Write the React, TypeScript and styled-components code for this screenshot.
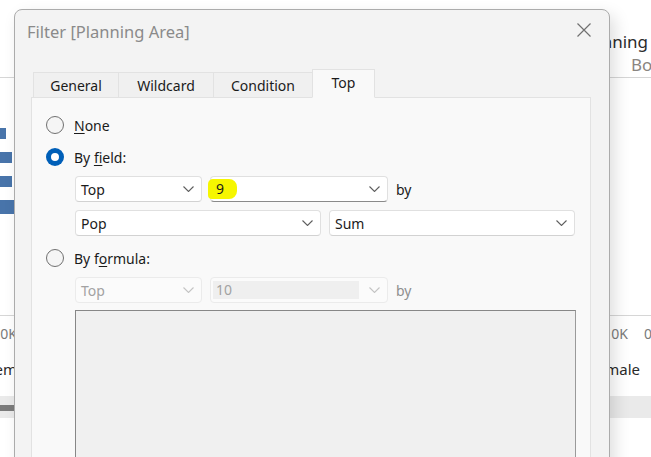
import styled, { createGlobalStyle } from "styled-components";

const GlobalStyle = createGlobalStyle`
  html, body {
    margin: 0;
    padding: 0;
    background: #ffffff;
    overflow: hidden;
  }
  body {
    font-family: "Noto Sans", "Open Sans", sans-serif;
    color: #1b1b1b;
  }
`;

const Page = styled.div`
  position: relative;
  width: 651px;
  height: 457px;
  overflow: hidden;
  background: #ffffff;
`;

/* ---------- report behind the dialog ---------- */

const Backdrop = styled.div`
  display: flex;
  flex-direction: column;
  height: 100%;
`;

const HeaderRow = styled.div`
  height: 77px;
  border-bottom: 1px solid #d6d6d6;
  display: flex;
  justify-content: flex-end;
`;

const HeaderCell = styled.div`
  width: 41px;
  display: flex;
  flex-direction: column;
  padding-top: 32px;
  gap: 3px;
`;

const HeaderText = styled.div<{ $muted?: boolean; $alignEnd?: boolean }>`
  display: flex;
  justify-content: ${(p) => (p.$alignEnd ? "flex-end" : "flex-start")};
  padding: ${(p) => (p.$alignEnd ? "0 3px 0 0" : "0 0 0 21px")};
  font-size: 17px;
  line-height: 20px;
  white-space: nowrap;
  color: ${(p) => (p.$muted ? "#8a8580" : "#2b2b2b")};
`;

const ChartArea = styled.div`
  height: 238px;
  border-bottom: 1px solid #d6d6d6;
  display: flex;
  flex-direction: column;
  gap: 13px;
  padding-top: 50px;
  box-sizing: border-box;
`;

const Bar = styled.div<{ $w: number; $h: number }>`
  width: ${(p) => p.$w}px;
  height: ${(p) => p.$h}px;
  background: #4874aa;
`;

const LowerRow = styled.div<{ $h: number; $pt: number }>`
  height: ${(p) => p.$h}px;
  padding-top: ${(p) => p.$pt}px;
  box-sizing: border-box;
  display: flex;
  justify-content: space-between;
`;

const Cell = styled.div<{ $w: number; $end?: boolean; $gap?: number }>`
  width: ${(p) => p.$w}px;
  display: flex;
  justify-content: ${(p) => (p.$end ? "flex-end" : "flex-start")};
  gap: ${(p) => p.$gap ?? 0}px;
  white-space: nowrap;
`;

const Tick = styled.span`
  font-size: 14px;
  line-height: 18px;
  color: #7a7a7a;
`;

const Category = styled.span`
  font-size: 15px;
  line-height: 20px;
  color: #2a2a2a;
`;

const Band = styled.div`
  height: 22px;
  background: #eaeaea;
  padding-top: 9px;
  box-sizing: border-box;
`;

const BandBar = styled.div`
  width: 30px;
  height: 6px;
  background: #7b7b7b;
`;

/* ---------- dialog ---------- */

const Dialog = styled.div`
  position: absolute;
  left: 14px;
  top: 9px;
  width: 596px;
  height: 470px;
  box-sizing: border-box;
  background: #f3f3f3;
  border: 1px solid #ababab;
  border-radius: 8px;
  box-shadow: 5px 6px 16px rgba(0, 0, 0, 0.13);
  display: flex;
  flex-direction: column;
`;

const TitleBar = styled.div`
  height: 59px;
  display: flex;
  justify-content: space-between;
  align-items: flex-start;
  padding: 11px 18px 0 12px;
  box-sizing: border-box;
`;

const Title = styled.div`
  font-size: 16.5px;
  line-height: 22px;
  color: #8a8a8a;
`;

const CloseButton = styled.button`
  margin-top: 2px;
  width: 14px;
  height: 14px;
  padding: 0;
  border: none;
  background: none;
  display: flex;
`;

const TabStrip = styled.div`
  display: flex;
  align-items: flex-end;
  height: 29px;
  margin: 0 0 -1px 18px;
  position: relative;
  z-index: 1;
`;

const Tab = styled.div<{ $w: number; $active?: boolean }>`
  width: ${(p) => p.$w}px;
  height: ${(p) => (p.$active ? 29 : 26)}px;
  box-sizing: border-box;
  display: flex;
  align-items: center;
  justify-content: center;
  font-size: 14px;
  color: #1b1b1b;
  background: ${(p) => (p.$active ? "#f9f9f9" : "#f0f0f0")};
  border: 1px solid #e2e2e2;
  border-bottom-color: ${(p) => (p.$active ? "#f9f9f9" : "#e2e2e2")};
  margin-left: -1px;
  padding-bottom: ${(p) => (p.$active ? 2 : 0)}px;

  &:first-child {
    margin-left: 0;
  }
`;

const Panel = styled.div`
  flex: 1;
  margin: 0 18px 0 16px;
  background: #f9f9f9;
  border: 1px solid #e2e2e2;
  padding: 18px 0 0 14px;
  display: flex;
  flex-direction: column;
`;

const RadioRow = styled.label<{ $mt?: number }>`
  display: flex;
  align-items: center;
  gap: 10px;
  height: 18px;
  margin-top: ${(p) => p.$mt ?? 0}px;
  font-size: 14px;
`;

const Radio = styled.span<{ $checked?: boolean }>`
  width: 18px;
  height: 18px;
  box-sizing: border-box;
  border-radius: 50%;
  flex: none;
  background: ${(p) => (p.$checked ? "#ffffff" : "#f5f5f5")};
  border: ${(p) => (p.$checked ? "none" : "1px solid #707070")};
  box-shadow: ${(p) => (p.$checked ? "inset 0 0 0 5px #005fb8" : "none")};
`;

const Accel = styled.span`
  text-decoration: underline;
  text-underline-offset: 2px;
`;

const FieldRow = styled.div<{ $mt: number }>`
  display: flex;
  align-items: center;
  gap: 8px;
  margin: ${(p) => p.$mt}px 0 0 29px;
  font-size: 14px;
`;

const Combo = styled.div<{ $w: number; $disabled?: boolean; $editable?: boolean }>`
  width: ${(p) => p.$w}px;
  height: 26px;
  box-sizing: border-box;
  display: flex;
  align-items: center;
  justify-content: space-between;
  padding: 0 7px 0 5px;
  border: 1px solid ${(p) => (p.$disabled ? "#ebebeb" : "#e0e0e0")};
  border-bottom-color: ${(p) =>
    p.$editable ? "#8a8a8a" : p.$disabled ? "#ebebeb" : "#d2d2d2"};
  border-radius: 4px;
  background: ${(p) => (p.$disabled ? "#fbfbfb" : "#ffffff")};
  color: ${(p) => (p.$disabled ? "#a2a2a2" : "#1b1b1b")};
`;

const DisabledEdit = styled.span`
  flex: 1;
  height: 18px;
  line-height: 18px;
  margin: 0 10px 0 -3px;
  padding-left: 3px;
  background: #efefef;
`;

const Highlight = styled.span`
  display: inline-block;
  height: 20px;
  line-height: 20px;
  margin-left: -8px;
  padding: 0 13px 0 8px;
  background: #f6f600;
  border-radius: 5px 8px 8px 4px;
`;

const ByLabel = styled.span<{ $disabled?: boolean }>`
  color: ${(p) => (p.$disabled ? "#8f8f8f" : "#1b1b1b")};
`;

const FormulaBox = styled.div`
  width: 501px;
  height: 160px;
  box-sizing: border-box;
  margin: 7px 0 0 29px;
  background: #f0f0f0;
  border: 1px solid #878787;
  border-right-color: #9a9a9a;
`;

const Chevron = ({ color = "#5e5e5e" }: { color?: string }) => (
  <svg width="11" height="6" viewBox="0 0 11 6" style={{ flex: "none" }}>
    <polyline points="0.5,0.5 5.5,5.5 10.5,0.5" fill="none" stroke={color} strokeWidth="1.1" />
  </svg>
);

const tabs = [
  { label: "General", w: 86 },
  { label: "Wildcard", w: 96 },
  { label: "Condition", w: 100 },
  { label: "Top", w: 63, active: true },
];

export default function App() {
  return (
    <Page>
      <GlobalStyle />
      <Backdrop>
        <HeaderRow>
          <HeaderCell>
            <HeaderText $alignEnd>Planning</HeaderText>
            <HeaderText $muted>Bottom</HeaderText>
          </HeaderCell>
        </HeaderRow>
        <ChartArea>
          <Bar $w={6} $h={11} />
          <Bar $w={12} $h={11} />
          <Bar $w={12} $h={11} />
          <Bar $w={30} $h={14} />
        </ChartArea>
        <LowerRow $h={43} $pt={9}>
          <Cell $w={17} $end>
            <Tick>10K</Tick>
          </Cell>
          <Cell $w={41} $gap={16}>
            <Cell $w={18} $end>
              <Tick>10K</Tick>
            </Cell>
            <Tick>0K</Tick>
          </Cell>
        </LowerRow>
        <LowerRow $h={37} $pt={0}>
          <Cell $w={17} $end>
            <Category>Item</Category>
          </Cell>
          <Cell $w={41}>
            <Cell $w={30} $end>
              <Category>Female</Category>
            </Cell>
          </Cell>
        </LowerRow>
        <Band>
          <BandBar />
        </Band>
      </Backdrop>

      <Dialog>
        <TitleBar>
          <Title>Filter [Planning Area]</Title>
          <CloseButton aria-label="Close">
            <svg width="14" height="14" viewBox="0 0 14 14">
              <path d="M0.5 0.5 L13.5 13.5 M13.5 0.5 L0.5 13.5" stroke="#707070" strokeWidth="1.2" />
            </svg>
          </CloseButton>
        </TitleBar>

        <TabStrip>
          {tabs.map((t) => (
            <Tab key={t.label} $w={t.w} $active={t.active}>
              {t.label}
            </Tab>
          ))}
        </TabStrip>

        <Panel>
          <RadioRow>
            <Radio />
            <span>
              <Accel>N</Accel>one
            </span>
          </RadioRow>

          <RadioRow $mt={14}>
            <Radio $checked />
            <span>
              By <Accel>f</Accel>ield:
            </span>
          </RadioRow>

          <FieldRow $mt={10}>
            <Combo $w={127}>
              <span>Top</span>
              <Chevron />
            </Combo>
            <Combo $w={178} $editable>
              <span>
                <Highlight>9</Highlight>
              </span>
              <Chevron />
            </Combo>
            <ByLabel>by</ByLabel>
          </FieldRow>

          <FieldRow $mt={8}>
            <Combo $w={246}>
              <span>Pop</span>
              <Chevron />
            </Combo>
            <Combo $w={246}>
              <span>Sum</span>
              <Chevron />
            </Combo>
          </FieldRow>

          <RadioRow $mt={13}>
            <Radio />
            <span>
              By f<Accel>o</Accel>rmula:
            </span>
          </RadioRow>

          <FieldRow $mt={10}>
            <Combo $w={127} $disabled>
              <span>Top</span>
              <Chevron color="#c4c4c4" />
            </Combo>
            <Combo $w={178} $disabled>
              <DisabledEdit>10</DisabledEdit>
              <Chevron color="#c4c4c4" />
            </Combo>
            <ByLabel $disabled>by</ByLabel>
          </FieldRow>

          <FormulaBox />
        </Panel>
      </Dialog>
    </Page>
  );
}
